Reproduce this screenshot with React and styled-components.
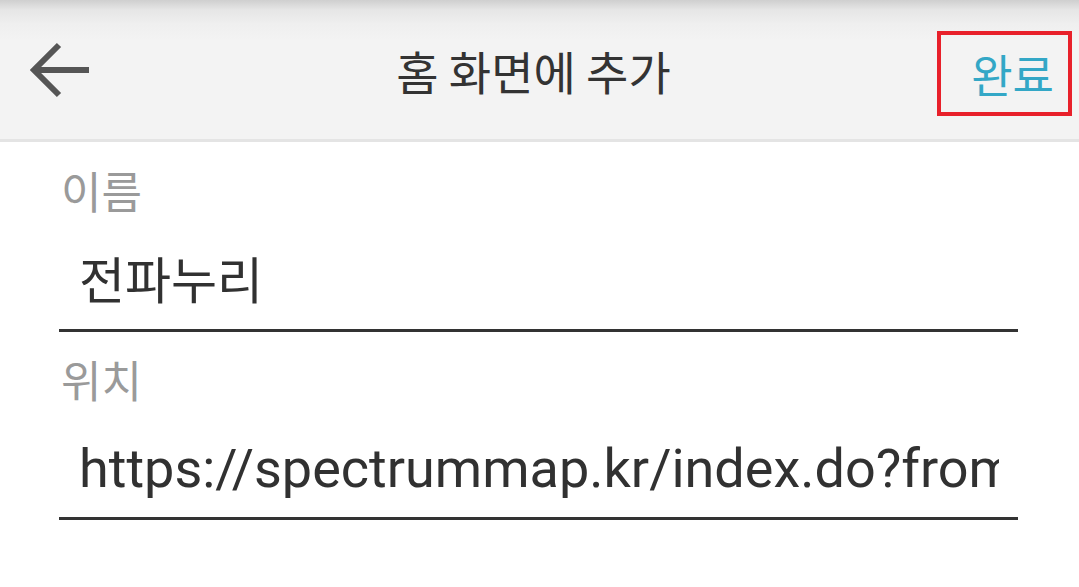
import styled, { createGlobalStyle } from "styled-components";

const GlobalStyle = createGlobalStyle`
  html, body {
    margin: 0;
    padding: 0;
    background: #ffffff;
  }
  body {
    font-family: "Noto Sans CJK KR", "Noto Sans", sans-serif;
    overflow: hidden;
  }
`;

const Page = styled.div`
  width: 1079px;
  height: 587px;
  background: #ffffff;
  display: flex;
  flex-direction: column;
`;

const TopBar = styled.div`
  height: 139px;
  flex-shrink: 0;
  display: flex;
  align-items: center;
  background: linear-gradient(#cfcfcf 0px, #e6e6e6 10px, #efefef 24px, #f3f3f3 40px, #f3f3f3 100%);
  border-bottom: 3px solid #e4e4e4;
`;

const BackButton = styled.div`
  width: 150px;
  height: 100%;
  display: flex;
  align-items: center;
  padding-left: 28px;
  box-sizing: border-box;
`;

const Title = styled.div`
  flex: 1;
  text-align: center;
  font-size: 46px;
  color: #333333;
  margin-left: -12px;
`;

const DoneWrap = styled.div`
  width: 150px;
  height: 100%;
  display: flex;
  align-items: center;
  justify-content: flex-end;
  padding-right: 7px;
  box-sizing: border-box;
`;

const DoneBox = styled.div`
  width: 135px;
  height: 85px;
  box-sizing: border-box;
  border: 4px solid #e8202a;
  display: flex;
  align-items: center;
  justify-content: flex-end;
  padding-right: 14px;
  font-size: 45px;
  color: #33a7c6;
  margin-top: 7px;
  flex-shrink: 0;
`;

const Form = styled.div`
  padding: 19px 61px 0 59px;
  display: flex;
  flex-direction: column;
`;

const Label = styled.div`
  font-size: 44px;
  color: #9a9a9a;
  padding-left: 2px;
  line-height: 58px;
`;

const Field = styled.div`
  border-bottom: 3px solid #333333;
  padding: ${(p) => p.$top}px 0 ${(p) => p.$bottom}px 20px;
  white-space: nowrap;
  margin-bottom: ${(p) => p.$gap || 0}px;
`;

const Value = styled.div`
  width: 920px;
  overflow: hidden;
  font-size: ${(p) => p.$size}px;
  font-family: ${(p) => (p.$latin ? `Roboto, "Noto Sans CJK KR", sans-serif` : `"Noto Sans CJK KR", sans-serif`)};
  color: #313131;
  line-height: ${(p) => p.$line}px;
`;

function BackArrow() {
  return (
    <svg width="64" height="56" viewBox="0 0 64 56">
      <path
        d="M31 3 L6 28 L31 53 M6 28 L61 28"
        fill="none"
        stroke="#555555"
        strokeWidth="6"
      />
    </svg>
  );
}

export default function App() {
  return (
    <Page>
      <GlobalStyle />
      <TopBar>
        <BackButton>
          <BackArrow />
        </BackButton>
        <Title>홈 화면에 추가</Title>
        <DoneWrap>
          <DoneBox>완료</DoneBox>
        </DoneWrap>
      </TopBar>
      <Form>
        <Label>이름</Label>
        <Field $top={22} $bottom={16} $gap={18}>
          <Value $size={50} $line={72}>전파누리</Value>
        </Field>
        <Label>위치</Label>
        <Field $top={28} $bottom={15}>
          <Value $size={54} $line={66} $latin>
            https://spectrummap.kr/index.do?from
          </Value>
        </Field>
      </Form>
    </Page>
  );
}
